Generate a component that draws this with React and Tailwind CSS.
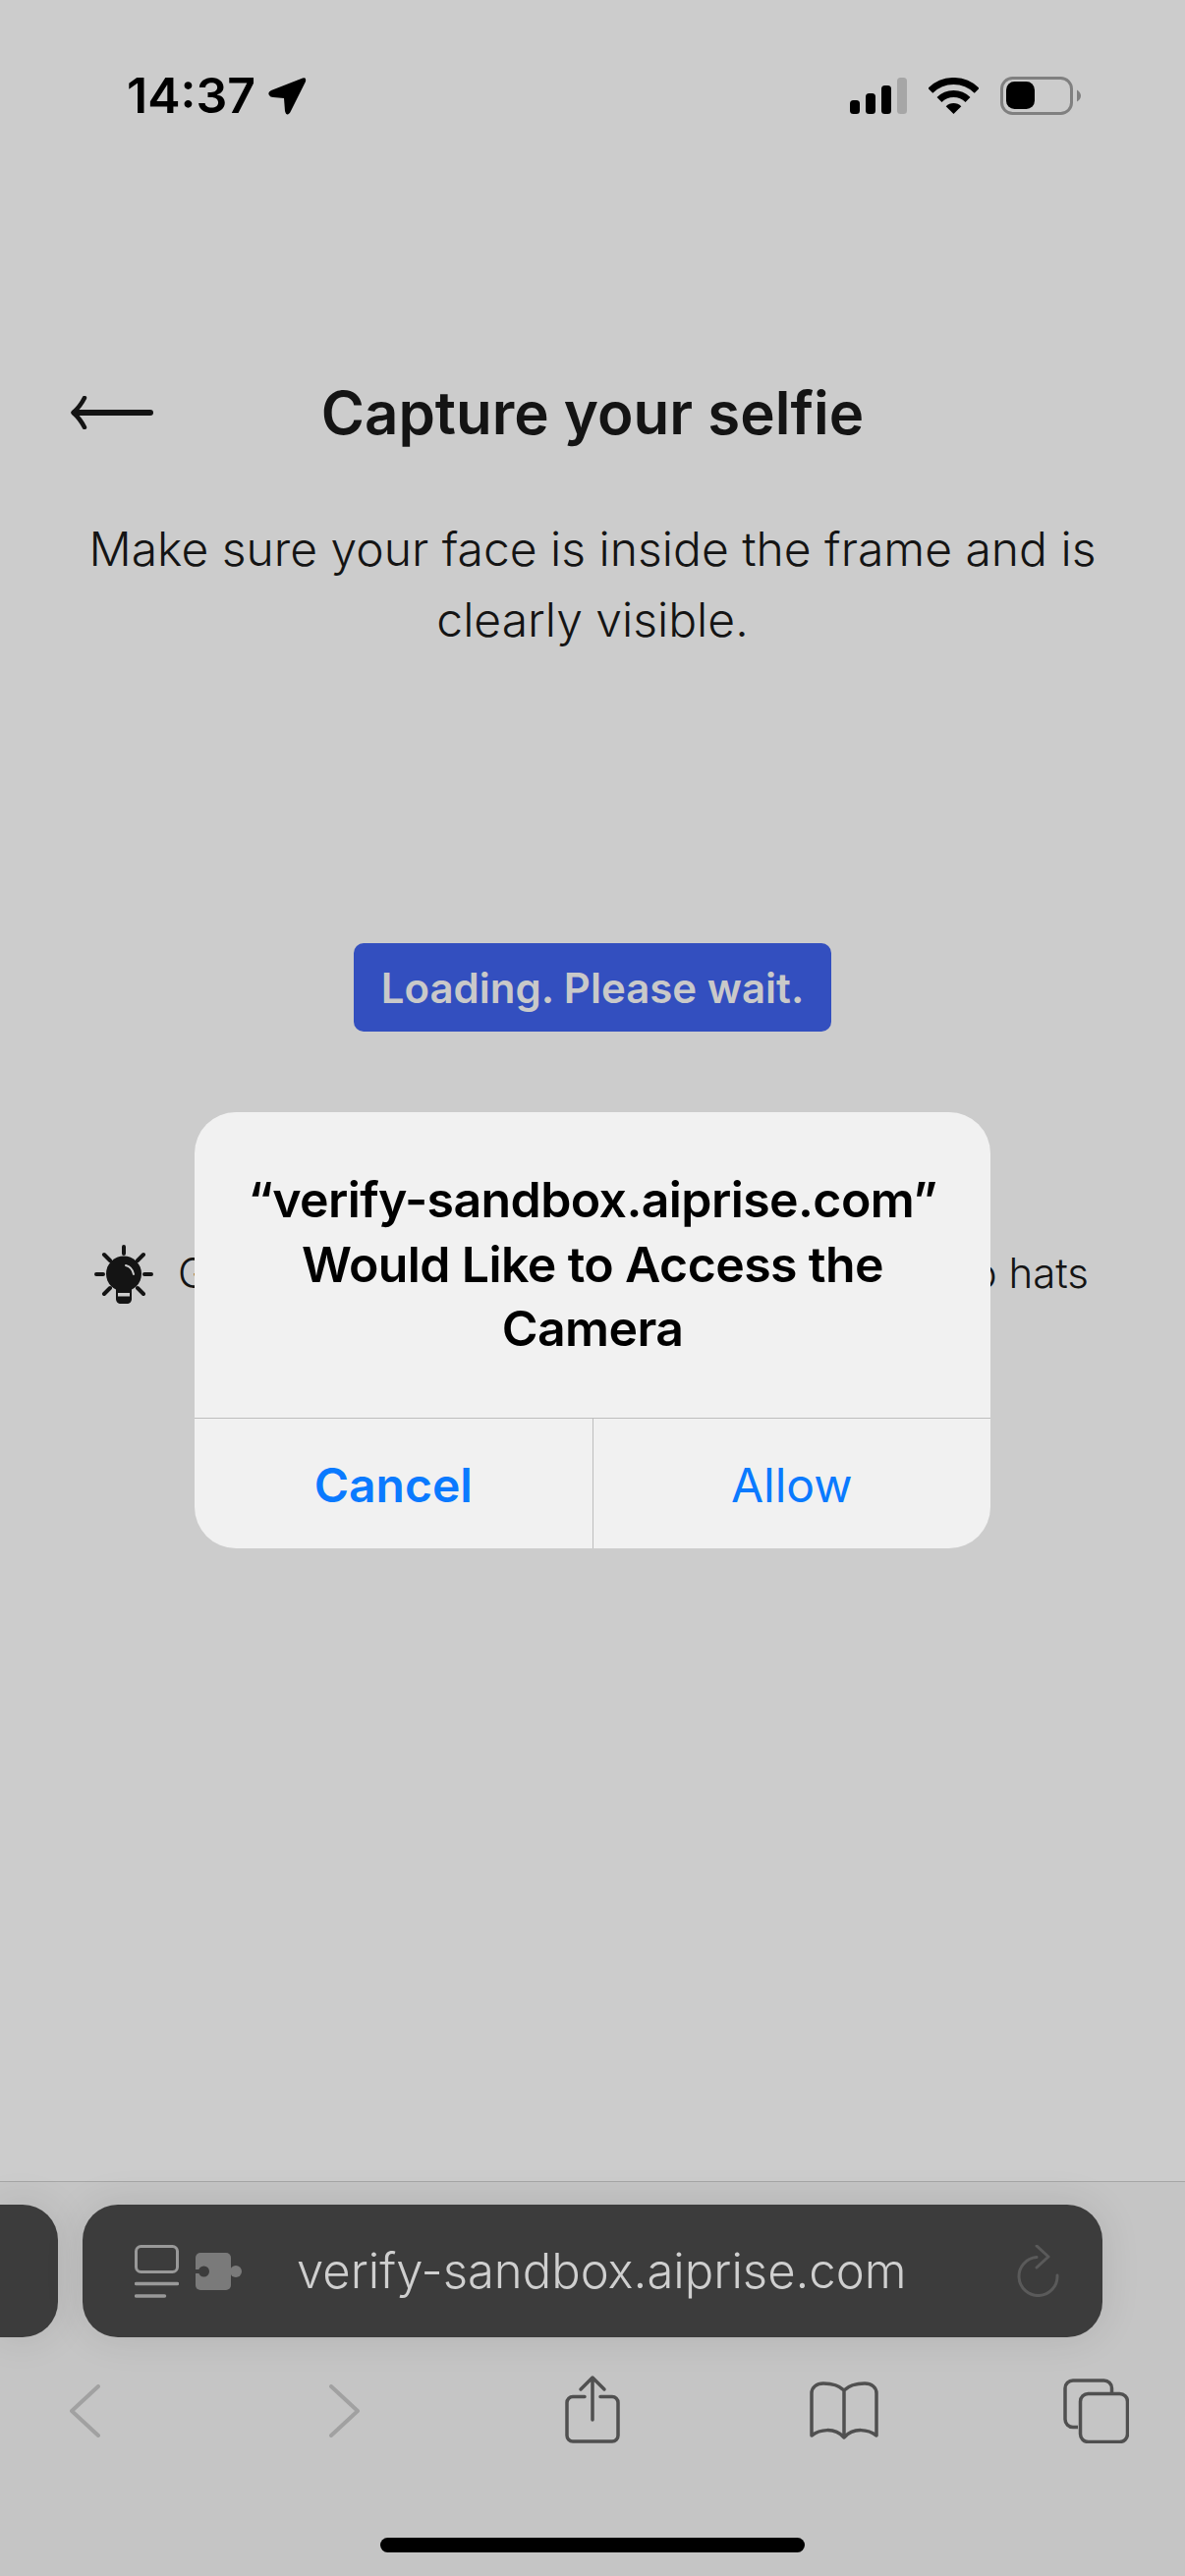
function StatusIcons() {
  return (
    <div className="flex items-center">
      <svg width="58" height="37" viewBox="0 0 58 37">
        <rect x="0" y="23" width="10" height="14" rx="3.5" fill="#000" />
        <rect x="16" y="16" width="10" height="21" rx="3.5" fill="#000" />
        <rect x="32" y="8" width="10" height="29" rx="3.5" fill="#000" />
        <rect x="48" y="0" width="10" height="37" rx="3.5" fill="#a6a6a6" />
      </svg>
      <svg className="ml-[22px]" width="51" height="37" viewBox="0 0 51 37" fill="none">
        <path d="M1.8 13.3A33.5 33.5 0 0 1 49.2 13.3" stroke="#000" strokeWidth="7" />
        <path d="M11 22.5A20.5 20.5 0 0 1 40 22.5" stroke="#000" strokeWidth="7" />
        <path d="M25.5 37L17.7 29.2A11 11 0 0 1 33.3 29.2Z" fill="#000" />
      </svg>
      <svg className="ml-[22px]" width="82" height="39" viewBox="0 0 82 39" fill="none">
        <rect x="1.5" y="1.5" width="71" height="36" rx="11" stroke="#808080" strokeWidth="3" />
        <rect x="6" y="5" width="29" height="28" rx="8.5" fill="#000" />
        <path d="M78 13.5C80.5 15 82 17 82 19.5C82 22 80.5 24 78 25.5Z" fill="#808080" />
      </svg>
    </div>
  );
}

function BulbIcon() {
  return (
    <svg width="60" height="60" viewBox="0 0 60 60" fill="none" className="shrink-0">
      <g stroke="#141414" strokeWidth="4" strokeLinecap="round">
        <path d="M30 2V9M2 30H9M51 30H58M10 10L16 16M50 10L44 16M10 50L16 44M50 50L44 44" />
      </g>
      <circle cx="30" cy="29.5" r="18" fill="#141414" />
      <path d="M22 44H38V55C38 58 36 60 33 60H27C24 60 22 58 22 55Z" fill="#141414" />
      <rect x="24" y="49" width="12" height="3.5" fill="#cccccc" />
      <path d="M32 21C36 22 39 25 40 30" stroke="#cccccc" strokeWidth="2" strokeLinecap="round" />
    </svg>
  );
}

function PageIcon() {
  return (
    <svg width="45" height="54" viewBox="0 0 45 54" fill="none">
      <rect x="1.5" y="1.5" width="42" height="26" rx="5" stroke="#999999" strokeWidth="3" />
      <path d="M1.5 39.5H43.5" stroke="#999999" strokeWidth="3.5" strokeLinecap="round" />
      <path d="M1.5 52H30.5" stroke="#999999" strokeWidth="3.5" strokeLinecap="round" />
    </svg>
  );
}

function PuzzleIcon() {
  return (
    <svg width="47" height="38" viewBox="0 0 47 38">
      <rect x="0" y="0" width="36" height="38" rx="5" fill="#7a7a7a" />
      <circle cx="41" cy="19" r="6" fill="#7a7a7a" />
      <rect x="34" y="17" width="4" height="4" fill="#7a7a7a" />
      <circle cx="8.5" cy="19" r="5.5" fill="#3c3c3c" />
      <rect x="0" y="17" width="6" height="4" fill="#3c3c3c" />
    </svg>
  );
}

function ReloadIcon() {
  return (
    <svg width="43" height="53" viewBox="0 0 43 53" fill="none">
      <path d="M20 12.6A19.5 19.5 0 1 0 41 31" stroke="#5a5a5a" strokeWidth="3" strokeLinecap="round" />
      <path d="M20 1L32 12L20 23" stroke="#5a5a5a" strokeWidth="3" strokeLinecap="round" strokeLinejoin="round" />
    </svg>
  );
}

function Chevron({ flip }) {
  return (
    <svg width="31" height="54" viewBox="0 0 31 54" fill="none">
      <path
        d={flip ? "M2 2L29 27L2 52" : "M29 2L2 27L29 52"}
        stroke="#a1a1a1"
        strokeWidth="4"
        strokeLinecap="round"
        strokeLinejoin="round"
      />
    </svg>
  );
}

function App() {
  return (
    <main
      className="relative flex h-[2622px] w-[1206px] flex-col overflow-hidden bg-[#cccccc] text-[#141414]"
      style={{ fontFamily: "Inter, 'Noto Sans', sans-serif" }}
    >
      <div className="mt-[78px] flex h-[39px] items-center justify-between pl-[129px] pr-[106px]">
        <div className="flex items-center">
          <span className="text-[50px] font-semibold leading-[39px] text-black">14:37</span>
          <svg className="ml-[13px]" width="39" height="39" viewBox="0 0 39 39">
            <path d="M35 1.5L3 14Q-1 16 1 19Q2 21 5 21L16 22L17 35Q18 39 20 38.5Q22 38 23 35L38 5Q39 0 35 1.5Z" fill="#000" />
          </svg>
        </div>
        <StatusIcons />
      </div>

      <header className="mt-[263px] grid h-[80px] grid-cols-[1fr_auto_1fr] items-center">
        <div className="pl-[72px]">
          <svg width="84" height="34" viewBox="0 0 84 34" fill="none" className="block">
            <path d="M4 17H81" stroke="#141414" strokeWidth="6" strokeLinecap="round" />
            <path d="M14 2C11 8 7 13 2.5 17C7 21 11 26 14 32" stroke="#141414" strokeWidth="4.5" strokeLinecap="round" strokeLinejoin="round" />
          </svg>
        </div>
        <h1 className="text-[60px] font-semibold leading-[80px]">Capture your selfie</h1>
        <div />
      </header>

      <p className="mt-[63px] text-center text-[48px] font-light leading-[72px]">
        Make sure your face is inside the frame and is
        <br />
        clearly visible.
      </p>

      <div className="mt-[293px] flex h-[90px] w-[486px] items-center justify-center self-center rounded-[10px] bg-[#334fbf] text-[42px] font-semibold text-[#c9c9c9]">
        Loading. Please wait.
      </div>

      <div className="mt-[216px] flex items-center pl-[96px] pr-[98px] text-[42px] font-light">
        <BulbIcon />
        <span className="-mt-[2px] ml-[25px]">Good lighting</span>
        <span className="-mt-[2px] ml-auto">No hats</span>
      </div>

      <footer className="mt-auto flex h-[402px] flex-col border-t border-[#a6a6a6] bg-[#c5c5c5]">
        <div className="mt-[23px] flex h-[135px] items-stretch gap-[25px]">
          <div className="w-[59px] rounded-r-[36px] bg-[#3c3c3c] shadow-[0_0_40px_rgba(0,0,0,0.1)]" />
          <div className="flex w-[1038px] items-center rounded-[36px] bg-[#3c3c3c] pl-[53px] pr-[44px] shadow-[0_0_40px_rgba(0,0,0,0.1)]">
            <PageIcon />
            <div className="ml-[17px]">
              <PuzzleIcon />
            </div>
            <span className="ml-[56px] text-[49px] font-light text-[#cfcfcf]">verify-sandbox.aiprise.com</span>
            <div className="ml-auto">
              <ReloadIcon />
            </div>
          </div>
        </div>

        <nav className="mt-[38px] flex h-[70px] items-start pl-[71px]">
          <div className="mt-[10px]">
            <Chevron />
          </div>
          <div className="ml-[233px] mt-[10px]">
            <Chevron flip />
          </div>
          <svg className="ml-[209px]" width="56" height="70" viewBox="0 0 56 70" fill="none">
            <path
              d="M20 22.5H8A6 6 0 0 0 2 28.5V62A6 6 0 0 0 8 68H48A6 6 0 0 0 54 62V28.5A6 6 0 0 0 48 22.5H36"
              stroke="#505050"
              strokeWidth="3.5"
              strokeLinecap="round"
            />
            <path d="M28 46V3M16 15L28 3L40 15" stroke="#505050" strokeWidth="3.5" strokeLinecap="round" strokeLinejoin="round" />
          </svg>
          <svg className="ml-[193px] mt-[7px]" width="70" height="59" viewBox="0 0 70 59" fill="none">
            <path
              d="M35 9C29 3 20 2 14 2C7 2 2 6 2 12V55C10 49 25 46 35 57C45 46 60 49 68 55V12C68 6 63 2 56 2C50 2 41 3 35 9ZM35 9V57"
              stroke="#505050"
              strokeWidth="3.5"
              strokeLinejoin="round"
            />
          </svg>
          <svg className="ml-[188px] mt-[4px]" width="67" height="66" viewBox="0 0 67 66" fill="none">
            <path d="M15 49.5H10A8 8 0 0 1 2 41.5V10A8 8 0 0 1 10 2H41.5A8 8 0 0 1 49.5 10V15" stroke="#505050" strokeWidth="3.5" />
            <rect x="17.5" y="15.5" width="48" height="49" rx="8" stroke="#505050" strokeWidth="3.5" />
          </svg>
        </nav>

        <div className="mx-auto mt-[96px] h-[15px] w-[432px] rounded-full bg-black" />
      </footer>

      <div className="absolute left-[198px] top-[1132px] flex h-[444px] w-[810px] flex-col overflow-hidden rounded-[42px] bg-[#f1f1f1] text-black">
        <div className="h-[311px] pt-[57px] text-center text-[50px] font-semibold leading-[65.5px] tracking-[-0.6px]">
          “verify-sandbox.aiprise.com”
          <br />
          Would Like to Access the
          <br />
          Camera
        </div>
        <div className="flex flex-1 border-t border-[#bdbdbd] text-[48px] text-[#0a7aff]">
          <button className="flex-1 border-r border-[#bdbdbd] pt-[3px] text-center font-semibold">Cancel</button>
          <button className="flex-1 pt-[3px] text-center">Allow</button>
        </div>
      </div>
    </main>
  );
}

export default App;
